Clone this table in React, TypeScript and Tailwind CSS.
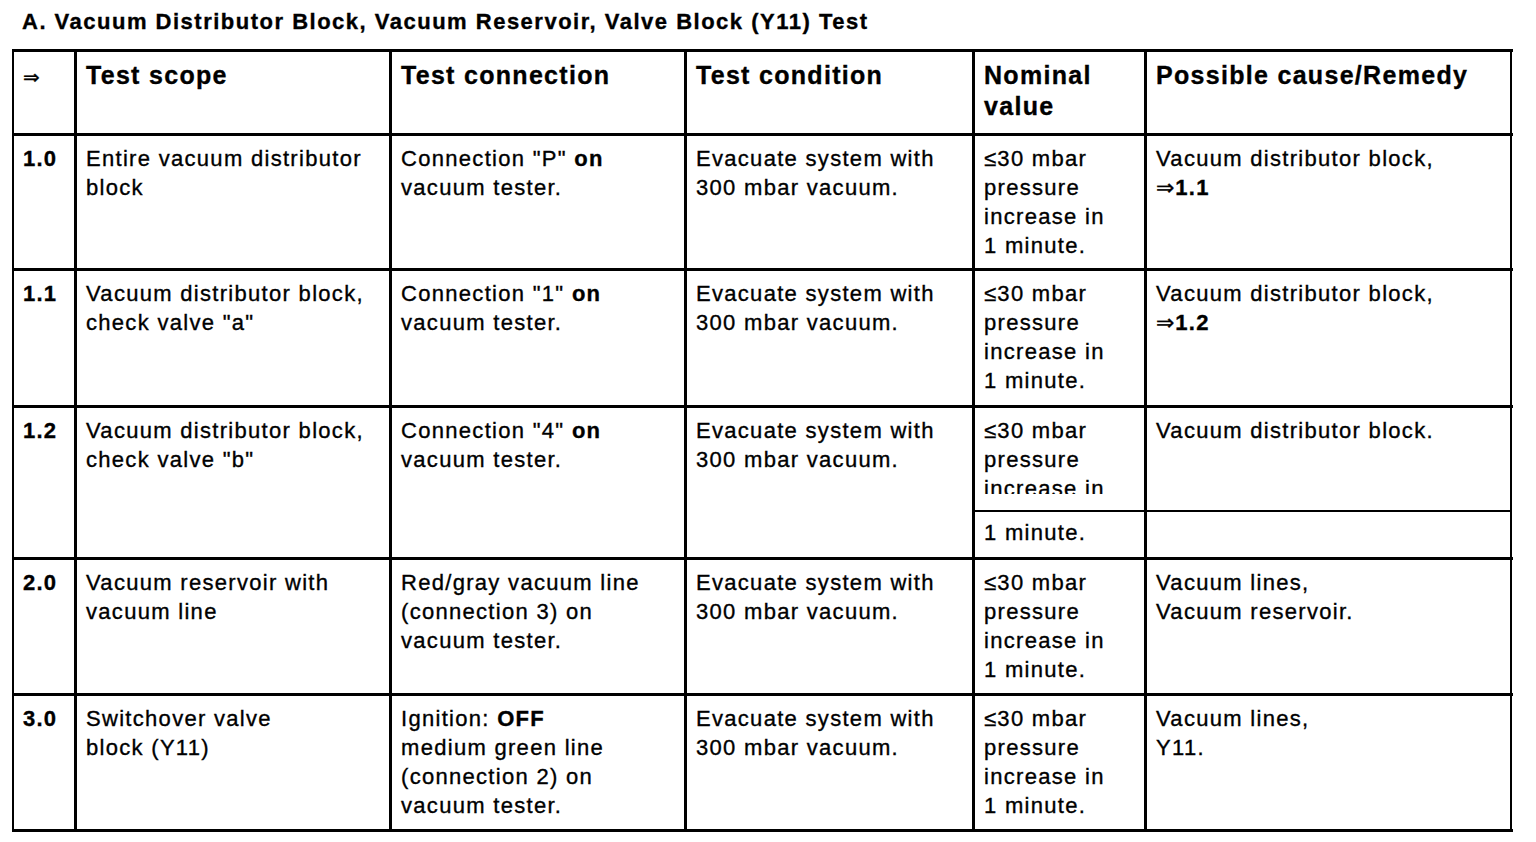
import React from 'react';

type Row = {
  num: string;
  scope: React.ReactNode;
  connection: React.ReactNode;
  height: string;
  remedy: React.ReactNode;
};

const NOMINAL = (
  <>
    ≤30 mbar
    <br />
    pressure
    <br />
    increase in
    <br />1 minute.
  </>
);

const EVACUATE = (
  <>
    Evacuate system with
    <br />
    300 mbar vacuum.
  </>
);

const rows: Row[] = [
  {
    num: '1.0',
    height: 'h-[135px]',
    scope: (
      <>
        Entire vacuum distributor
        <br />
        block
      </>
    ),
    connection: (
      <>
        Connection "P"<b> on</b>
        <br />
        vacuum tester.
      </>
    ),
    remedy: (
      <>
        Vacuum distributor block,
        <br />⇒<b>1.1</b>
      </>
    ),
  },
  {
    num: '1.1',
    height: 'h-[137px]',
    scope: (
      <>
        Vacuum distributor block,
        <br />
        check valve "a"
      </>
    ),
    connection: (
      <>
        Connection "1"<b> on</b>
        <br />
        vacuum tester.
      </>
    ),
    remedy: (
      <>
        Vacuum distributor block,
        <br />⇒<b>1.2</b>
      </>
    ),
  },
];

const lowerRows: Row[] = [
  {
    num: '2.0',
    height: 'h-[136px]',
    scope: (
      <>
        Vacuum reservoir with
        <br />
        vacuum line
      </>
    ),
    connection: (
      <>
        Red/gray vacuum line
        <br />
        (connection 3) on
        <br />
        vacuum tester.
      </>
    ),
    remedy: (
      <>
        Vacuum lines,
        <br />
        Vacuum reservoir.
      </>
    ),
  },
  {
    num: '3.0',
    height: 'h-[136px]',
    scope: (
      <>
        Switchover valve
        <br />
        block (Y11)
      </>
    ),
    connection: (
      <>
        Ignition: <b>OFF</b>
        <br />
        medium green line
        <br />
        (connection 2) on
        <br />
        vacuum tester.
      </>
    ),
    remedy: (
      <>
        Vacuum lines,
        <br />
        Y11.
      </>
    ),
  },
];

const grid =
  'grid grid-cols-[63px_315px_295px_288px_172px_365px] border-b-[3px] border-black';
const cell = 'border-r-[3px] border-black pl-[9px] pt-[8px]';
const lastCell = 'border-r-2 border-black pl-[9px] pt-[8px]';

function DataRow({ row }: { row: Row }) {
  return (
    <div className={`${grid} ${row.height}`}>
      <div className={`${cell} font-bold tracking-[1.2px]`}>{row.num}</div>
      <div className={cell}>{row.scope}</div>
      <div className={cell}>{row.connection}</div>
      <div className={cell}>{EVACUATE}</div>
      <div className={cell}>{NOMINAL}</div>
      <div className={lastCell}>{row.remedy}</div>
    </div>
  );
}

export default function App() {
  return (
    <div className="min-h-screen bg-white text-black font-['Liberation_Sans',Arial,sans-serif] [-webkit-text-stroke:0.35px_black]">
      <h1 className="pl-[22px] pt-[8px] text-[22px] font-bold leading-[28px] tracking-[1.5px]">
        A. Vacuum Distributor Block, Vacuum Reservoir, Valve Block (Y11) Test
      </h1>

      <div className="ml-[12px] mt-[13px] w-[1501px] border-l-2 border-t-[3px] border-black text-[22px] leading-[29px] tracking-[1.3px]">
        <div className={`${grid} h-[84px] text-[25px] font-bold leading-[31px] tracking-[1.3px]`}>
          <div className={`${cell} font-normal text-[20px] pt-[10px] font-['DejaVu_Sans',sans-serif]`}>⇒</div>
          <div className={cell}>Test scope</div>
          <div className={cell}>Test connection</div>
          <div className={cell}>Test condition</div>
          <div className={cell}>
            Nominal
            <br />
            value
          </div>
          <div className={lastCell}>Possible cause/Remedy</div>
        </div>

        {rows.map((r) => (
          <DataRow key={r.num} row={r} />
        ))}

        <div className={`${grid} h-[152px]`}>
          <div className={`${cell} font-bold tracking-[1.2px]`}>1.2</div>
          <div className={cell}>
            Vacuum distributor block,
            <br />
            check valve "b"
          </div>
          <div className={cell}>
            Connection "4"<b> on</b>
            <br />
            vacuum tester.
          </div>
          <div className={cell}>{EVACUATE}</div>
          <div className="flex flex-col border-r-[3px] border-black">
            <div className="h-[104px] border-b-2 border-black pl-[9px] pt-[8px]">
              <div className="h-[78px] overflow-hidden">
                ≤30 mbar
                <br />
                pressure
                <br />
                increase in
              </div>
            </div>
            <div className="flex-1 pl-[9px] pt-[6px]">1 minute.</div>
          </div>
          <div className="flex flex-col border-r-2 border-black">
            <div className="h-[104px] border-b-2 border-black pl-[9px] pt-[8px]">
              Vacuum distributor block.
            </div>
            <div className="flex-1" />
          </div>
        </div>

        {lowerRows.map((r) => (
          <DataRow key={r.num} row={r} />
        ))}
      </div>
    </div>
  );
}
